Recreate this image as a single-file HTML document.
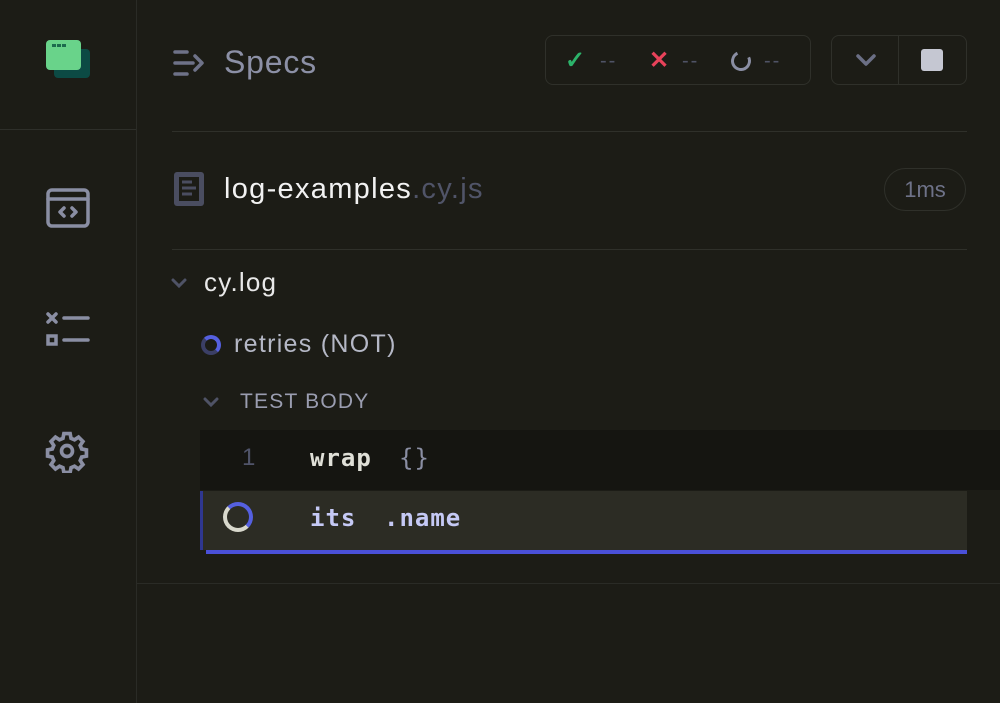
<!DOCTYPE html>
<html><head><meta charset="utf-8"><style>
*{margin:0;padding:0;box-sizing:border-box}
body{width:1000px;height:703px;background:#1c1c16;font-family:"Liberation Sans",sans-serif;position:relative;overflow:hidden}
.abs{position:absolute}
.mono{font-family:"DejaVu Sans Mono","Liberation Mono",monospace;font-weight:bold}
</style></head><body>
<div class="abs" style="left:136px;top:0;width:1px;height:703px;background:#2a2b26"></div>
<div class="abs" style="left:0;top:129px;width:136px;height:1px;background:#2e2f2a"></div>
<div class="abs" style="left:54px;top:49px;width:36px;height:29px;background:#0c4a44;border-radius:4px"></div>
<div class="abs" style="left:46px;top:40px;width:35px;height:30px;background:#69d38a;border-radius:4px"></div>
<div class="abs" style="left:52px;top:44px;width:4px;height:3px;background:#1d6b4e;box-shadow:5px 0 #1d6b4e,10px 0 #1d6b4e"></div>
<svg class="abs" style="left:46px;top:188px" width="44" height="40" viewBox="0 0 44 40" fill="none" stroke="#8a8ea3" stroke-width="3.5" stroke-linecap="round" stroke-linejoin="round"><rect x="2" y="2" width="40" height="36" rx="4"/><line x1="2" y1="11" x2="42" y2="11"/><path d="M18 20l-4 4 4 4M26 20l4 4-4 4"/></svg>
<svg class="abs" style="left:46px;top:312px" width="44" height="36" viewBox="0 0 44 36" fill="none" stroke="#8a8ea3" stroke-width="3.5" stroke-linecap="round"><path d="M2 2l8 8M10 2l-8 8M18 6h24M18 28h24"/><rect x="2" y="24" width="8" height="8"/></svg>
<svg class="abs" style="left:45px;top:429px" width="44" height="44" viewBox="0 0 24 24" fill="none" stroke="#8a8ea3" stroke-width="2"><path d="M10.3 2.5h3.4l.5 2.6 1.9.8 2.2-1.5 2.4 2.4-1.5 2.2.8 1.9 2.6.5v3.4l-2.6.5-.8 1.9 1.5 2.2-2.4 2.4-2.2-1.5-1.9.8-.5 2.6h-3.4l-.5-2.6-1.9-.8-2.2 1.5-2.4-2.4 1.5-2.2-.8-1.9-2.6-.5v-3.4l2.6-.5.8-1.9-1.5-2.2 2.4-2.4 2.2 1.5 1.9-.8z"/><circle cx="12" cy="12" r="3"/></svg>
<svg class="abs" style="left:173px;top:49px" width="32" height="28" viewBox="0 0 32 28" fill="none" stroke="#6e7288" stroke-width="3.5" stroke-linecap="round" stroke-linejoin="round"><path d="M2 3h12M2 14h18M2 25h12M22 7l7 7-7 7"/></svg>
<div class="abs" style="left:224px;top:44px;font-size:32px;color:#8c90a6;letter-spacing:0.8px">Specs</div>
<div class="abs" style="left:545px;top:35px;width:266px;height:50px;border:1px solid #2f302a;border-radius:8px"></div>
<div class="abs" style="left:565px;top:46px;font-size:24px;color:#2cb36a;font-weight:bold">✓</div>
<div class="abs" style="left:600px;top:50px;font-size:20px;color:#4f5366;letter-spacing:2px">--</div>
<div class="abs" style="left:649px;top:46px;font-size:24px;color:#e8425a;font-weight:bold">✕</div>
<div class="abs" style="left:682px;top:50px;font-size:20px;color:#4f5366;letter-spacing:2px">--</div>
<div class="abs" style="left:731px;top:51px;width:20px;height:20px;border:3.5px solid #8a8ea3;border-top-color:transparent;border-radius:50%;transform:rotate(20deg)"></div>
<div class="abs" style="left:764px;top:50px;font-size:20px;color:#4f5366;letter-spacing:2px">--</div>
<div class="abs" style="left:831px;top:35px;width:136px;height:50px;border:1px solid #2f302a;border-radius:8px"></div>
<div class="abs" style="left:898px;top:36px;width:1px;height:48px;background:#2f302a"></div>
<svg class="abs" style="left:855px;top:53px" width="22" height="14" viewBox="0 0 22 14" fill="none" stroke="#6b6f85" stroke-width="3.5" stroke-linecap="round" stroke-linejoin="round"><path d="M3 3l8 8 8-8"/></svg>
<div class="abs" style="left:921px;top:49px;width:22px;height:22px;background:#c5c7d2;border-radius:3px"></div>
<div class="abs" style="left:172px;top:131px;width:795px;height:1px;background:#2f302a"></div>
<svg class="abs" style="left:173px;top:171px" width="32" height="36" viewBox="0 0 32 36"><rect x="1" y="1" width="30" height="34" rx="3" fill="#4a4d60"/><rect x="6" y="6" width="20" height="24" fill="#1c1c16"/><path d="M9 11h10M9 17h14M9 23h10" stroke="#4a4d60" stroke-width="3"/></svg>
<div class="abs" style="left:224px;top:173px;font-size:29px;color:#f2f2f2;letter-spacing:1.3px">log-examples<span style="color:#505468">.cy.js</span></div>
<div class="abs" style="left:884px;top:168px;width:82px;height:43px;border:1px solid #2f302a;border-radius:22px;font-size:22px;color:#6e7288;text-align:center;line-height:41px">1ms</div>
<div class="abs" style="left:172px;top:249px;width:795px;height:1px;background:#2f302a"></div>
<svg class="abs" style="left:171px;top:277px" width="16" height="12" viewBox="0 0 16 12" fill="none" stroke="#4f5366" stroke-width="3" stroke-linecap="round"><path d="M2 3l6 6 6-6"/></svg>
<div class="abs" style="left:204px;top:267px;font-size:26px;color:#e8e8e8;letter-spacing:1.2px">cy.log</div>
<div class="abs" style="left:201px;top:335px;width:20px;height:20px;border:4px solid #3b3f66;border-right-color:#5560e0;border-top-color:#5560e0;border-radius:50%"></div>
<div class="abs" style="left:234px;top:330px;font-size:25px;color:#b5b8c6;letter-spacing:1.3px">retries (NOT)</div>
<svg class="abs" style="left:203px;top:396px" width="16" height="12" viewBox="0 0 16 12" fill="none" stroke="#4f5366" stroke-width="3" stroke-linecap="round"><path d="M2 3l6 6 6-6"/></svg>
<div class="abs" style="left:240px;top:390px;font-size:21px;color:#9a9db0;letter-spacing:1.2px">TEST BODY</div>
<div class="abs" style="left:200px;top:430px;width:800px;height:60px;background:#151511"></div>
<div class="abs" style="left:242px;top:444px;font-size:24px;color:#50546a">1</div>
<div class="abs mono" style="left:310px;top:444px;font-size:24px;color:#e0e0d8;letter-spacing:1px">wrap</div>
<div class="abs mono" style="left:399px;top:444px;font-size:24px;color:#8a8ea3;font-weight:normal;letter-spacing:1px">{}</div>
<div class="abs" style="left:200px;top:491px;width:767px;height:59px;background:#2c2c24;border-left:3px solid #2f3790"></div>
<div class="abs" style="left:206px;top:550px;width:761px;height:4px;background:#4a50d8"></div>
<div class="abs" style="left:223px;top:502px;width:30px;height:30px;border:4px solid #d8d8cc;border-right-color:#5560e0;border-top-color:#5560e0;border-radius:50%"></div>
<div class="abs mono" style="left:310px;top:504px;font-size:24px;color:#c5c9f5;letter-spacing:1px">its</div>
<div class="abs mono" style="left:384px;top:504px;font-size:24px;color:#c5c9f5;letter-spacing:1px">.name</div>
<div class="abs" style="left:137px;top:583px;width:863px;height:1px;background:#2a2b26"></div>
</body></html>
